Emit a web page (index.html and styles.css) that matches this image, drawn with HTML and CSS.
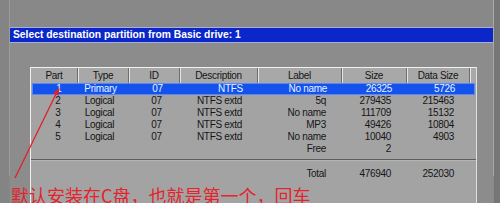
FILE: index.html
```html
<!DOCTYPE html>
<html>
<head>
<meta charset="utf-8">
<link rel="stylesheet" href="styles.css">
</head>
<body>
<div class="screen">
  <div class="window">
    <div class="titlebar">Select destination partition from Basic drive: 1</div>
    <div class="win-body">
      <div class="panel">
        <div class="row head">
          <div class="c">Part</div><div class="c">Type</div><div class="c">ID</div><div class="c">Description</div><div class="c">Label</div><div class="c">Size</div><div class="c">Data Size</div><div class="c"></div>
        </div>
        <div class="row sel">
          <div class="part">1</div><div class="type">Primary</div><div class="id">07</div><div class="r">NTFS</div><div class="r">No name</div><div class="r">26325</div><div class="r">5726</div><div></div>
        </div>
        <div class="row">
          <div class="part">2</div><div class="type">Logical</div><div class="id">07</div><div class="r">NTFS extd</div><div class="r">5q</div><div class="r">279435</div><div class="r">215463</div><div></div>
        </div>
        <div class="row">
          <div class="part">3</div><div class="type">Logical</div><div class="id">07</div><div class="r">NTFS extd</div><div class="r">No name</div><div class="r">111709</div><div class="r">15132</div><div></div>
        </div>
        <div class="row">
          <div class="part">4</div><div class="type">Logical</div><div class="id">07</div><div class="r">NTFS extd</div><div class="r">MP3</div><div class="r">49426</div><div class="r">10804</div><div></div>
        </div>
        <div class="row">
          <div class="part">5</div><div class="type">Logical</div><div class="id">07</div><div class="r">NTFS extd</div><div class="r">No name</div><div class="r">10040</div><div class="r">4903</div><div></div>
        </div>
        <div class="row">
          <div class="part"></div><div class="type"></div><div class="id"></div><div class="r"></div><div class="r">Free</div><div class="r">2</div><div class="r"></div><div></div>
        </div>
        <div class="sep"></div>
        <div class="row total">
          <div class="part"></div><div class="type"></div><div class="id"></div><div class="r"></div><div class="r">Total</div><div class="r">476940</div><div class="r">252030</div><div></div>
        </div>
      </div>
    </div>
  </div>
  <svg class="arrow" width="500" height="203" viewBox="0 0 500 203">
    <line x1="15" y1="178" x2="56" y2="94" stroke="#e0202a" stroke-width="1.3"/>
    <polygon points="59.5,88 58.6,95.8 53,93" fill="#e0202a"/>
  </svg>
  <div class="note">默认安装在C盘，也就是第一个，回车</div>
</div>
</body>
</html>
```

FILE: styles.css
```css
html, body {
  margin: 0;
  padding: 0;
  background: #888888;
}
.screen {
  position: relative;
  width: 500px;
  height: 203px;
  overflow: hidden;
  background: linear-gradient(to right, #848484 0, #848484 9px, #888888 9px, #888888 494px, #767676 494px);
}
.window {
  margin-left: 9px;
  padding-top: 27px;
  width: 485px;
  height: 176px;
  border-left: 1px solid #9c9c9c;
  border-right: 1px solid #a8a8a8;
  box-sizing: border-box;
}
.titlebar {
  height: 16px;
  box-sizing: border-box;
  border-top: 1px solid #a6b0d8;
  border-bottom: 1px solid #a6b0d8;
  background: #0b27c9;
  color: #ffffff;
  font-family: "Liberation Sans", Arial, sans-serif;
  font-weight: bold;
  font-size: 10.3px;
  line-height: 14px;
  padding-left: 3px;
  white-space: nowrap;
}
.win-body {
  padding: 24px 0 0 20px;
  background: #8c8c8c;
  height: 140px;
}
.panel {
  width: 447px;
  height: 140px;
  box-sizing: border-box;
  border-left: 1px solid #f0f0f0;
  border-top: 1px solid #f0f0f0;
  border-right: 1px solid #e0e0e0;
  background: #a3a3a3;
  font-family: "Liberation Sans", Arial, sans-serif;
  font-size: 10px;
  letter-spacing: -0.3px;
  color: #151515;
}
.row {
  display: grid;
  grid-template-columns: 47px 51px 51px 78px 84px 65px 63px 6px;
  height: 12px;
  line-height: 12px;
  white-space: nowrap;
}
.row.head {
  height: 15px;
  line-height: 15px;
}
.head .c {
  background: #a8a8a8;
  text-align: center;
  border-right: 1px solid #6e6e6e;
  box-shadow: inset 1px 0 0 #e4e4e4;
}
.head .c:first-child {
  box-shadow: none;
}
.head .c:last-child {
  border-right: none;
}
.part {
  text-align: center;
  padding-left: 7px;
}
.type {
  text-align: center;
  padding-right: 8px;
}
.id {
  text-align: center;
  padding-left: 4px;
}
.r {
  text-align: right;
  padding-right: 16px;
}
.row.sel {
  background: #1452ee;
  color: #e6f4ff;
  margin: 0 1px 0 1px;
  box-shadow: inset 0 0 0 1px #5a88f0;
}
.sep {
  height: 0;
  margin-top: 4px;
  border-top: 1px solid #5e5e5e;
  border-bottom: 1px solid #b4b4b4;
}
.row.total {
  margin-top: 7px;
}
.arrow {
  position: absolute;
  left: 0;
  top: 0;
}
.note {
  position: absolute;
  left: 11px;
  top: 184px;
  font-family: "Noto Sans CJK SC", sans-serif;
  font-size: 18px;
  line-height: 22px;
  color: #e3232e;
  white-space: nowrap;
}
```
